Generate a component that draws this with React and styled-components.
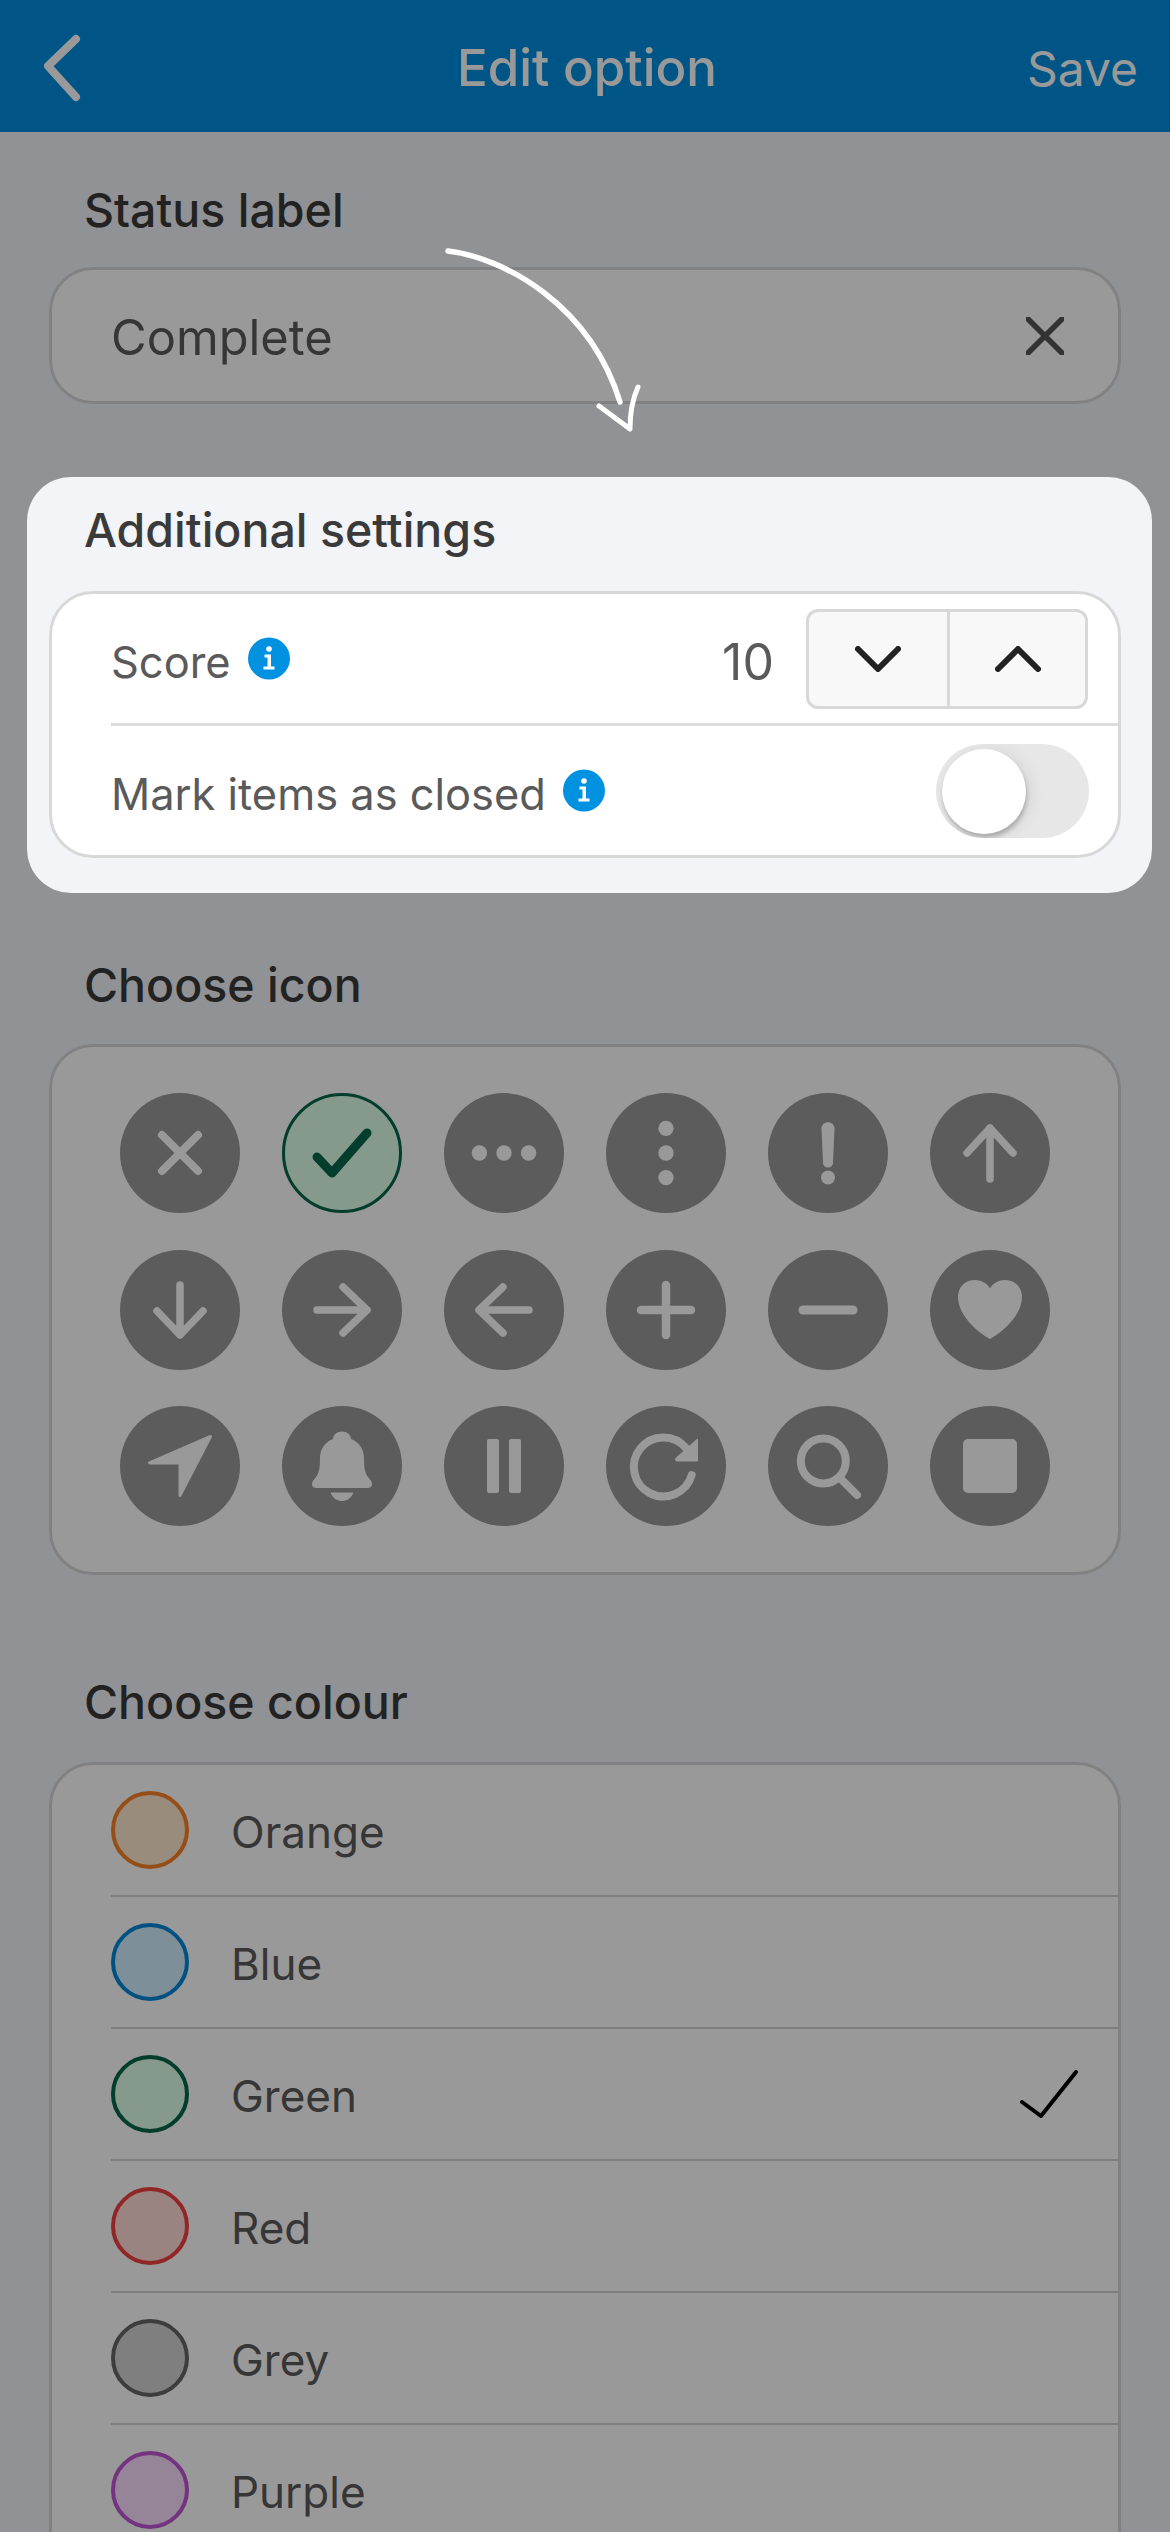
import React from "react";
import styled, { createGlobalStyle } from "styled-components";

const Global = createGlobalStyle`
  html, body { margin: 0; padding: 0; background: #f2f4f8; }
  * { box-sizing: border-box; }
  body { font-family: Inter, "Liberation Sans", sans-serif; }
`;

const Page = styled.div`
  position: relative;
  width: 1170px;
  height: 2532px;
  overflow: hidden;
  background: #f2f4f8;
`;
const Dim = styled.div`
  position: absolute;
  inset: 0;
  background: rgba(0, 0, 0, 0.4);
  z-index: 1;
`;
const Header = styled.header`
  height: 132px;
  background: #008ee1;
  color: #fff;
  display: grid;
  grid-template-columns: 1fr auto 1fr;
  align-items: center;
  padding: 0 32px 0 43px;
`;
const Back = styled.svg`
  display: block;
  overflow: visible;
`;
const Title = styled.div`
  font-size: 51px;
  font-weight: 500;
  line-height: 58px;
  margin: 4px 0 0 -7px;
`;
const Save = styled.div`
  font-size: 48px;
  font-weight: 400;
  line-height: 58px;
  justify-self: end;
  margin-top: 6px;
`;
const Main = styled.main`
  padding: 51px 49px 0;
`;
const Label = styled.div`
  font-size: 46.5px;
  font-weight: 500;
  line-height: 54px;
  color: #3a3a3a;
  padding-left: 35px;
  margin-top: ${(p) => p.$top || 0}px;
  margin-bottom: ${(p) => p.$bottom || 30}px;
`;
const Panel = styled.section`
  background: #fff;
  border: 3px solid #d8d8d8;
  border-radius: 44px;
`;
const InputBox = styled(Panel)`
  height: 137px;
  display: flex;
  align-items: center;
  justify-content: space-between;
  padding: 0 54px 0 59px;
`;
const InputText = styled.div`
  font-size: 48.8px;
  color: #5a5a5a;
  line-height: 56px;
  margin-top: 4px;
`;
const Highlight = styled.div`
  position: relative;
  z-index: 2;
  margin: 73px -31px 0 -22px;
  padding: 26px 31px 35px 22px;
  background: #f2f4f8;
  border-radius: 44px;
`;
const SettingRow = styled.div`
  height: ${(p) => p.$h}px;
  margin-left: 59px;
  padding-right: 30px;
  display: flex;
  align-items: center;
  justify-content: space-between;
  border-bottom: ${(p) => (p.$line ? "3px solid #dcdcdc" : "none")};
`;
const RowLabel = styled.div`
  display: flex;
  align-items: center;
  gap: 17px;
  font-size: 43.4px;
  line-height: 54px;
  color: #5a5a5a;
  padding-top: 6px;
`;
const Info = styled.svg`
  width: 43px;
  height: 43px;
  display: block;
  margin-top: -6px;
`;
const StepWrap = styled.div`
  display: flex;
  align-items: center;
`;
const Value = styled.div`
  font-size: 50px;
  color: #5a5a5a;
  margin: 6px 32px 0 0;
  line-height: 56px;
`;
const Stepper = styled.div`
  width: 282px;
  height: 100px;
  display: grid;
  grid-template-columns: 1fr 1fr;
  background: #f8f8f8;
  border: 3px solid #d8d8d8;
  border-radius: 12px;
`;
const StepButton = styled.div`
  display: flex;
  align-items: center;
  justify-content: center;
  border-left: ${(p) => (p.$divider ? "3px solid #d8d8d8" : "none")};
`;
const Track = styled.div`
  position: relative;
  width: 153px;
  height: 94px;
  border-radius: 47px;
  background: #e7e7e7;
  overflow: hidden;
  margin-right: -1px;
`;
const Knob = styled.div`
  position: absolute;
  left: 6px;
  top: 5px;
  width: 84px;
  height: 85px;
  border-radius: 50%;
  background: #fff;
  box-shadow: 1px 4px 4px rgba(0, 0, 0, 0.22), 5px 2px 18px rgba(0, 0, 0, 0.08);
`;
const IconPanel = styled(Panel)`
  height: 531px;
  padding: 46px 68px;
  display: grid;
  grid-template-columns: repeat(6, 120px);
  grid-auto-rows: 120px;
  column-gap: 42px;
  row-gap: 36.5px;
`;
const IconCircle = styled.div`
  width: 120px;
  height: 120px;
  border-radius: 50%;
  background: ${(p) => (p.$selected ? "#deffe9" : "#999")};
  border: ${(p) => (p.$selected ? "3px solid #056649" : "none")};
  display: flex;
  align-items: center;
  justify-content: center;
`;
const Glyph = styled.svg`
  width: 120px;
  height: 120px;
  flex: none;
  overflow: visible;
`;
const ColorPanel = styled(Panel)`
  padding-bottom: 40px;
`;
const ColorRow = styled.div`
  height: 132px;
  margin-left: 59px;
  padding-right: 40px;
  display: flex;
  align-items: center;
  border-bottom: 2px solid #d4d4d4;
`;
const Swatch = styled.div`
  width: 78px;
  height: 78px;
  border-radius: 50%;
  background: ${(p) => p.$fill};
  border: 4px solid ${(p) => p.$line};
  margin-right: 42px;
  flex: none;
`;
const ColorName = styled.div`
  font-size: 44px;
  color: #5a5a5a;
  line-height: 54px;
  padding-top: 4px;
  flex: 1;
`;
const Pointer = styled.svg`
  position: absolute;
  left: 0;
  top: 0;
  width: 1170px;
  height: 480px;
  z-index: 3;
  pointer-events: none;
`;

const Line = ({ d, w = 7.5, c = "#fff" }) => (
  <path d={d} fill="none" stroke={c} strokeWidth={w} strokeLinecap="round" strokeLinejoin="round" />
);

const glyphs = [
  <Line d="M-18 -18L18 18M18 -18L-18 18" w={8} />,
  <Line d="M-25 4L-10 20L25 -20" w={9} c="#056649" />,
  <g fill="#fff"><circle cx="-24.6" r="7.7" /><circle r="7.7" /><circle cx="24.6" r="7.7" /></g>,
  <g fill="#fff"><circle cy="-24.6" r="7.7" /><circle r="7.7" /><circle cy="24.6" r="7.7" /></g>,
  <g fill="#fff">
    <path d="M-6.5 -24.5C-6.5 -33 6.5 -33 6.5 -24.5L5 10C4.8 16 -4.8 16 -5 10Z" />
    <circle cy="24.5" r="7" />
  </g>,
  <Line d="M0 26V-25M-23 0L0 -25L23 0" />,
  <Line d="M0 -25V25M-23 1L0 25L23 1" />,
  <Line d="M-25 0H25M1 -23L25 0L1 23" />,
  <Line d="M25 0H-25M-1 -23L-25 0L-1 23" />,
  <Line d="M0 -25V25M-25 0H25" w={8.5} />,
  <Line d="M-25 0H25" w={9} />,
  <path
    fill="#fff"
    d="M0 -21.5C-3 -27 -9 -30 -15 -30C-25 -30 -32 -23 -32 -13C-32 5 -13 22 0 29C13 22 32 5 32 -13C32 -23 25 -30 15 -30C9 -30 3 -27 0 -21.5Z"
  />,
  <path
    fill="#fff"
    stroke="#fff"
    strokeWidth="3"
    strokeLinejoin="round"
    d="M30.5 -29.5L-30.5 -3H0V29.5Z"
  />,
  <path
    fill="#fff"
    d="M0 -34.5C5 -34.5 9 -31 9 -27C17 -24 22 -17 22 -8C22 2 23 7 26 11C28 14 30 15 30 18C30 21 28 22 25 22H-25C-28 22 -30 21 -30 18C-30 15 -28 14 -26 11C-23 7 -22 2 -22 -8C-22 -17 -17 -24 -9 -27C-9 -31 -5 -34.5 0 -34.5ZM-11.5 26.5H11.5C9 33 4 35 0 35C-4 35 -9 33 -11.5 26.5Z"
  />,
  <g fill="#fff"><rect x="-17" y="-27" width="12" height="54" rx="2" /><rect x="5" y="-27" width="12" height="54" rx="2" /></g>,
  <g>
    <path d="M25.7 9A29.5 29.5 0 1 1 20 -18" fill="none" stroke="#fff" strokeWidth="8" strokeLinecap="round" />
    <path d="M31.5 -27V-5H11C9 -5 9 -7 10.5 -8.5Z" fill="#fff" stroke="#fff" strokeWidth="1" strokeLinejoin="round" />
  </g>,
  <g>
    <circle cx="-4.7" cy="-5" r="22.5" fill="none" stroke="#fff" strokeWidth="8" />
    <Line d="M12 12L29 29" w={8} />
  </g>,
  <rect x="-27" y="-27" width="54" height="54" rx="5" fill="#fff" />,
];

const colours = [
  ["Orange", "#ffe9d0", "#f98228"],
  ["Blue", "#d4eeff", "#0088d8"],
  ["Green", "#deffe9", "#056649"],
  ["Red", "#ffdcd9", "#f04040"],
  ["Grey", "#d4d4d4", "#666666"],
  ["Purple", "#fadcff", "#c055d4"],
];

const InfoDot = () => (
  <Info viewBox="0 0 43 43">
    <circle cx="21" cy="21.5" r="21" fill="#0091e0" />
    <circle cx="21" cy="12" r="2.8" fill="#fff" />
    <path d="M16.5 17.5H23V29.5H26.5V32.5H15.5V29.5H19.5V20.5H16.5Z" fill="#fff" />
  </Info>
);

export default function App() {
  return (
    <Page>
      <Global />
      <Header>
        <Back width="40" height="64" viewBox="0 0 40 64">
          <path d="M33 5L5 32L33 63" fill="none" stroke="#fff" strokeWidth="8" strokeLinecap="round" strokeLinejoin="round" />
        </Back>
        <Title>Edit option</Title>
        <Save>Save</Save>
      </Header>
      <Main>
        <Label>Status label</Label>
        <InputBox>
          <InputText>Complete</InputText>
          <svg width="38" height="38" viewBox="0 0 38 38">
            <path d="M2 2L36 36M36 2L2 36" stroke="#555" strokeWidth="5.5" strokeLinecap="round" />
          </svg>
        </InputBox>
        <Highlight>
          <Label $bottom={34}>Additional settings</Label>
          <Panel>
            <SettingRow $h={132} $line>
              <RowLabel>Score <InfoDot /></RowLabel>
              <StepWrap>
                <Value>10</Value>
                <Stepper>
                  <StepButton>
                    <svg width="46" height="26" viewBox="0 0 46 26"><path d="M3 3L23 23L43 3" fill="none" stroke="#222" strokeWidth="6" strokeLinecap="round" strokeLinejoin="round" /></svg>
                  </StepButton>
                  <StepButton $divider>
                    <svg width="46" height="26" viewBox="0 0 46 26"><path d="M3 23L23 3L43 23" fill="none" stroke="#222" strokeWidth="6" strokeLinecap="round" strokeLinejoin="round" /></svg>
                  </StepButton>
                </Stepper>
              </StepWrap>
            </SettingRow>
            <SettingRow $h={129}>
              <RowLabel>Mark items as closed <InfoDot /></RowLabel>
              <Track><Knob /></Track>
            </SettingRow>
          </Panel>
        </Highlight>
        <Label $top={65} $bottom={32}>Choose icon</Label>
        <IconPanel>
          {glyphs.map((g, i) => (
            <IconCircle key={i} $selected={i === 1}>
              <Glyph viewBox="-60 -60 120 120">{g}</Glyph>
            </IconCircle>
          ))}
        </IconPanel>
        <Label $top={100} $bottom={33}>Choose colour</Label>
        <ColorPanel>
          {colours.map(([name, fill, line]) => (
            <ColorRow key={name}>
              <Swatch $fill={fill} $line={line} />
              <ColorName>{name}</ColorName>
              {name === "Green" && (
                <svg width="58" height="48" viewBox="0 0 58 48">
                  <path d="M2 32L21 46L56 2" fill="none" stroke="#000" strokeWidth="4" strokeLinecap="round" strokeLinejoin="round" />
                </svg>
              )}
            </ColorRow>
          ))}
        </ColorPanel>
      </Main>
      <Dim />
      <Pointer viewBox="0 0 1170 480">
        <path d="M448 251C505 258 590 305 620 402" fill="none" stroke="#fff" strokeWidth="5.5" strokeLinecap="round" />
        <path d="M599 406L630 429C630 414 632 400 638 387" fill="none" stroke="#fff" strokeWidth="5" strokeLinecap="round" strokeLinejoin="round" />
      </Pointer>
    </Page>
  );
}
